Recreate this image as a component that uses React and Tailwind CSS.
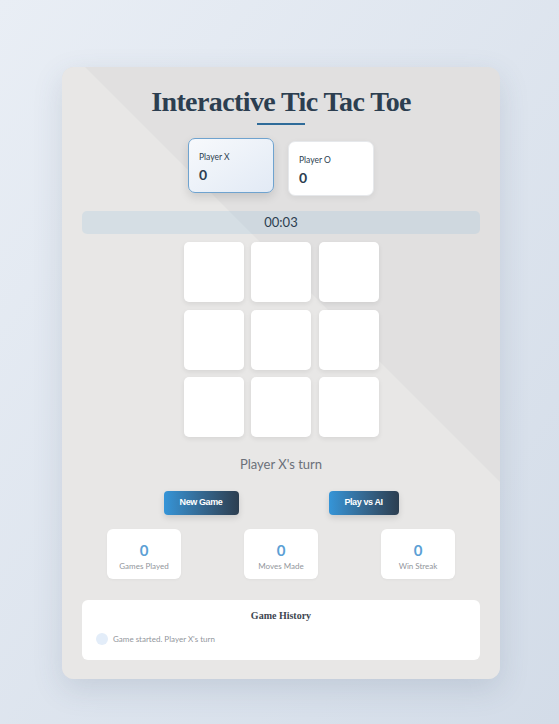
import React from "react";

const sans = { fontFamily: "Lato, 'Open Sans', sans-serif" };

function PlayerCard({ name, score, active }) {
  return (
    <div
      className={`w-[86px] h-[55px] rounded-[7px] px-[10px] pt-[12px] ${
        active
          ? "-translate-y-[3px] border border-[#6fa3cf] bg-gradient-to-br from-[#f7f9fc] to-[#e2eaf5] shadow-[0_4px_10px_rgba(0,0,0,0.12)]"
          : "border border-[#e6e8eb] bg-white shadow-[0_2px_6px_rgba(0,0,0,0.06)]"
      }`}
    >
      <div className="text-[8.5px] text-[#2c3e50] leading-[12px]">{name}</div>
      <div className="text-[14px] font-bold text-[#2c3e50] leading-[20px] mt-[2px]">{score}</div>
    </div>
  );
}

function Stat({ value, label }) {
  return (
    <div className="w-[74px] h-[50px] rounded-[6px] bg-white flex flex-col items-center pt-[12px] shadow-[0_1px_3px_rgba(0,0,0,0.04)]">
      <div className="text-[15px] font-bold text-[#5c9fd5] leading-[18px]">{value}</div>
      <div className="text-[8px] text-[#92969c] leading-[12px] mt-[1px]">{label}</div>
    </div>
  );
}

export default function App() {
  const cells = Array.from({ length: 9 });

  return (
    <div
      className="min-h-[724px] w-full bg-gradient-to-br from-[#e9eef5] to-[#d3dce8] pt-[67px] pb-[45px]"
      style={sans}
    >
      <div className="relative ml-[62px] w-[438px] h-[612px] rounded-[12px] bg-[#e1e0e0] shadow-[0_10px_30px_rgba(60,80,110,0.15)] overflow-hidden">
        {/* diagonal light area of the card background */}
        <div className="absolute inset-0 bg-[#e8e7e6] [clip-path:polygon(0_0,23px_0,438px_415px,438px_100%,0_100%)]" />

        <div className="relative flex flex-col items-center px-5 pt-5">
          <h1
            className="text-[28px] font-bold leading-[30px] text-[#2c3e50] tracking-[-0.6px]"
            style={{ fontFamily: "'Liberation Serif', 'DejaVu Serif', serif" }}
          >
            Interactive Tic Tac Toe
          </h1>
          <div className="mt-[6px] h-[2px] w-[48px] bg-[#2f6b99]" />

          <div className="mt-[16px] flex gap-[14px]">
            <PlayerCard name="Player X" score="0" active />
            <PlayerCard name="Player O" score="0" />
          </div>

          <div className="mt-[15px] w-full h-[23px] rounded-[5px] bg-[rgba(52,152,219,0.1)] flex items-center justify-center text-[13px] text-[#2c3e50]">
            00:03
          </div>

          <div className="mt-[8px] grid grid-cols-[repeat(3,60px)] gap-[7.5px]">
            {cells.map((_, i) => (
              <div
                key={i}
                className="h-[60px] w-[60px] rounded-[5px] bg-white shadow-[0_2px_5px_rgba(0,0,0,0.08)]"
              />
            ))}
          </div>

          <div className="mt-[18px] text-[13px] leading-[18px] text-[#6b7079]">Player X's turn</div>

          <div
            className="mt-[18px] flex gap-[90px]"
            style={{ fontFamily: "'Liberation Sans', Arial, sans-serif" }}
          >
            <button className="w-[75px] h-[24px] rounded-[4px] bg-gradient-to-r from-[#3595d8] to-[#2c3e50] text-white text-[9px] font-semibold tracking-[-0.4px] shadow-[0_3px_6px_rgba(0,0,0,0.12)]">
              New Game
            </button>
            <button className="w-[70px] h-[24px] rounded-[4px] bg-gradient-to-r from-[#3595d8] to-[#2c3e50] text-white text-[9px] font-semibold tracking-[-0.4px] shadow-[0_3px_6px_rgba(0,0,0,0.12)]">
              Play vs AI
            </button>
          </div>

          <div className="mt-[14px] flex gap-[63px]">
            <Stat value="0" label="Games Played" />
            <Stat value="0" label="Moves Made" />
            <Stat value="0" label="Win Streak" />
          </div>

          <div className="mt-[21px] w-full h-[60px] rounded-[6px] bg-white px-[14px] pt-[9px]">
            <div
              className="text-center text-[10px] font-bold leading-[13px] text-[#3d4650]"
              style={{ fontFamily: "'Liberation Serif', 'DejaVu Serif', serif" }}
            >
              Game History
            </div>
            <div className="mt-[11px] flex items-center gap-[5px]">
              <div className="h-[12px] w-[12px] rounded-full bg-[#e3edf9]" />
              <div className="text-[8px] text-[#92969c] leading-[12px]">Game started. Player X's turn</div>
            </div>
          </div>
        </div>
      </div>
    </div>
  );
}
